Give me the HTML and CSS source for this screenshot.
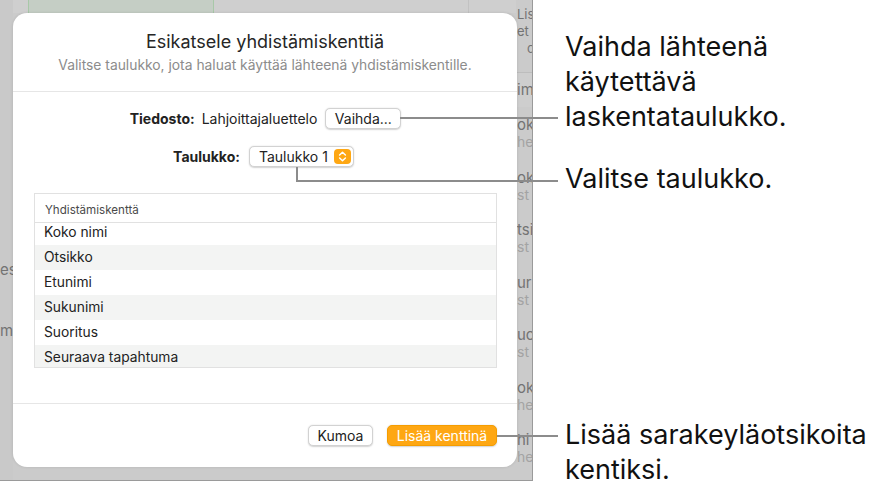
FILE: index.html
```html
<!DOCTYPE html>
<html lang="fi">
<head>
<meta charset="utf-8">
<title>Esikatsele yhdistämiskenttiä</title>
<link rel="stylesheet" href="styles.css">
</head>
<body>
<div class="stage">
  <div class="app">
    <div class="app-left">
      <span class="frag">es</span>
      <span class="frag frag-m">m</span>
    </div>
    <div class="app-main">
      <div class="topbar">
        <div class="topbar-green"></div>
        <div class="topbar-seg"></div>
      </div>
    </div>
    <div class="app-right">
      <div class="side-head">
        <span class="frag">Lis</span>
        <span class="frag">et</span>
        <span class="frag frag-c">c</span>
      </div>
      <div class="side-first"><span class="frag">im</span></div>
      <div class="side-item"><span class="frag">ok</span><span class="frag sub">he</span></div>
      <div class="side-item"><span class="frag">ok</span><span class="frag sub">st</span></div>
      <div class="side-item"><span class="frag">tsi</span><span class="frag sub">st</span></div>
      <div class="side-item"><span class="frag">ur</span><span class="frag sub">st</span></div>
      <div class="side-item"><span class="frag">uo</span><span class="frag sub">st</span></div>
      <div class="side-item"><span class="frag">ok</span><span class="frag sub">he</span></div>
      <div class="side-item"><span class="frag">hi</span><span class="frag sub">he</span></div>
    </div>
  </div>

  <div class="dialog">
    <div class="dlg-head">
      <h1 class="dlg-title">Esikatsele yhdistämiskenttiä</h1>
      <p class="dlg-sub">Valitse taulukko, jota haluat käyttää lähteenä yhdistämiskentille.</p>
    </div>
    <div class="dlg-body">
      <div class="form-row">
        <span class="lbl">Tiedosto:</span>
        <span class="val">Lahjoittajaluettelo</span>
        <button class="btn btn-change">Vaihda...</button>
      </div>
      <div class="form-row form-row-2">
        <span class="lbl">Taulukko:</span>
        <div class="popup">
          <span class="popup-text">Taulukko 1</span>
          <span class="stepper">
            <svg width="17" height="15" viewBox="0 0 17 15">
              <rect x="0" y="0" width="17" height="15" rx="4" fill="#fea713"/>
              <polyline points="5.6,6 8.5,3.3 11.4,6" fill="none" stroke="#fff" stroke-width="1.5" stroke-linecap="round" stroke-linejoin="round"/>
              <polyline points="5.6,9 8.5,11.7 11.4,9" fill="none" stroke="#fff" stroke-width="1.5" stroke-linecap="round" stroke-linejoin="round"/>
            </svg>
          </span>
        </div>
      </div>
      <div class="table">
        <div class="th">Yhdistämiskenttä</div>
        <div class="tbody">
          <div class="tr">Koko nimi</div>
          <div class="tr alt">Otsikko</div>
          <div class="tr">Etunimi</div>
          <div class="tr alt">Sukunimi</div>
          <div class="tr">Suoritus</div>
          <div class="tr alt">Seuraava tapahtuma</div>
        </div>
      </div>
    </div>
    <div class="dlg-foot">
      <button class="btn btn-cancel">Kumoa</button>
      <button class="btn btn-primary">Lisää kenttinä</button>
    </div>
  </div>

  <div class="line line-1"></div>
  <div class="line line-2v"></div>
  <div class="line line-2h"></div>
  <div class="line line-3"></div>

  <p class="callout callout-1">Vaihda lähteenä<br>käytettävä<br>laskentataulukko.</p>
  <p class="callout callout-2">Valitse taulukko.</p>
  <p class="callout callout-3">Lisää sarakeyläotsikoita<br>kentiksi.</p>
</div>
</body>
</html>
```

FILE: styles.css
```css
* { box-sizing: border-box; }

html, body {
  margin: 0;
  padding: 0;
  background: #ffffff;
}

body {
  font-family: "Inter", "Liberation Sans", sans-serif;
  color: #1f1f1f;
}

.stage {
  position: relative;
  width: 883px;
  height: 497px;
  overflow: hidden;
}

/* ---------- dimmed app behind the sheet ---------- */
.app {
  width: 533px;
  height: 481px;
  background: #c9c9c9;
  border-right: 1px solid #9a9a9a;
  border-bottom: 1px solid #9a9a9a;
  display: flex;
  overflow: hidden;
}

.app-left {
  width: 13px;
  flex: none;
  display: flex;
  flex-direction: column;
  padding-top: 261px;
  overflow: hidden;
}

.frag {
  display: block;
  font-size: 15px;
  line-height: 18px;
  color: #737373;
  white-space: nowrap;
}

.frag-m { margin-top: 43px; }

.app-main {
  flex: 1;
  background: #cbcbcb;
}

.topbar {
  height: 13px;
  background: #cfcfcf;
  padding-left: 15px;
  display: flex;
}

.topbar-green {
  width: 186px;
  height: 13px;
  background: #c5cec5;
  border-left: 1px solid #a8c8a8;
  border-right: 1px solid #a8c8a8;
}

.topbar-seg {
  width: 255px;
  height: 13px;
  border-right: 1px solid #c2c2c2;
}

.app-right {
  width: 16px;
  flex: none;
  background: #cbcbcb;
  padding-left: 1px;
  overflow: hidden;
}

.side-head {
  height: 73px;
  padding-top: 6px;
  border-bottom: 1px solid #bdbdbd;
}

.side-head .frag {
  font-size: 13px;
  line-height: 17px;
}

.side-head .frag-c { padding-left: 10px; }

.side-first {
  height: 34px;
  padding-top: 8px;
  background: #cecece;
}

.side-item {
  height: 52.5px;
  padding-top: 9px;
}

.side-item .sub {
  font-size: 14px;
  line-height: 16px;
  color: #a3a3a3;
}

/* ---------- sheet ---------- */
.dialog {
  position: absolute;
  left: 13px;
  top: 13px;
  width: 504px;
  height: 454px;
  background: #ffffff;
  border-radius: 14px;
  box-shadow: 0 0 3px rgba(0, 0, 0, 0.12);
  display: flex;
  flex-direction: column;
}

.dlg-head {
  padding: 18px 20px 17px;
  border-bottom: 1px solid #e6e6e6;
  text-align: center;
}

.dlg-title {
  margin: 0;
  font-size: 18px;
  line-height: 22px;
  font-weight: 400;
  color: #262626;
}

.dlg-sub {
  margin: 4px 0 0;
  font-size: 13.85px;
  line-height: 17px;
  color: #8c8c8c;
}

.dlg-body {
  flex: 1;
  padding: 16px 20px 0 21px;
  display: flex;
  flex-direction: column;
}

.form-row {
  height: 21px;
  display: flex;
  align-items: center;
  justify-content: center;
  font-size: 14px;
  color: #222;
}

.form-row-2 {
  margin-top: 17px;
  padding-right: 4px;
}

.lbl {
  font-weight: 700;
  margin-right: 7px;
}

.val { margin-right: 8px; }

.btn {
  font-family: inherit;
  font-size: 14px;
  height: 21px;
  padding: 0;
  background: #ffffff;
  color: #222;
  border: 0.5px solid #d2d2d2;
  border-radius: 5px;
  box-shadow: 0 0.5px 1.5px rgba(0, 0, 0, 0.18);
}

.btn-change { width: 76px; }

.popup {
  width: 105px;
  height: 21px;
  margin-left: 2px;
  display: flex;
  align-items: center;
  justify-content: space-between;
  padding: 0 2px 0 9px;
  border: 0.5px solid #d2d2d2;
  border-radius: 5px;
  box-shadow: 0 0.5px 1.5px rgba(0, 0, 0, 0.18);
  background: #fff;
}

.stepper { display: flex; }

.table {
  margin-top: 26px;
  height: 175px;
  border: 1px solid #e1e1e1;
  display: flex;
  flex-direction: column;
}

.th {
  height: 29px;
  flex: none;
  border-bottom: 1px solid #e1e1e1;
  padding: 9px 0 0 10px;
  font-size: 11.6px;
  line-height: 14px;
  color: #4a4a4a;
}

.tbody {
  flex: 1;
  overflow: hidden;
}

.tr {
  height: 25px;
  padding-left: 9px;
  font-size: 13.8px;
  line-height: 25px;
  color: #222;
}

.tr:first-child { margin-top: -3px; }

.tr.alt { background: #f3f4f3; }

.dlg-foot {
  border-top: 1px solid #e6e6e6;
  padding: 21px 20px 21px;
  display: flex;
  justify-content: flex-end;
  gap: 14px;
}

.btn-cancel { width: 65px; }

.btn-primary {
  width: 110px;
  background: #fea713;
  border-color: #f59d00;
  color: #ffffff;
  font-weight: 400;
}

/* ---------- callout leaders ---------- */
.line {
  position: absolute;
  background: #8c8c8c;
}

.line-1 { left: 400px; top: 117px; width: 158px; height: 2px; }
.line-2v { left: 296px; top: 167px; width: 2px; height: 15px; }
.line-2h { left: 296px; top: 180px; width: 262px; height: 2px; }
.line-3 { left: 497px; top: 435px; width: 61px; height: 2px; }

.callout {
  position: absolute;
  left: 565px;
  margin: 0;
  font-size: 27px;
  line-height: 35px;
  color: #111111;
  white-space: nowrap;
}

.callout-1 { top: 29px; }
.callout-2 { top: 161px; }
.callout-3 { top: 417px; }
```
